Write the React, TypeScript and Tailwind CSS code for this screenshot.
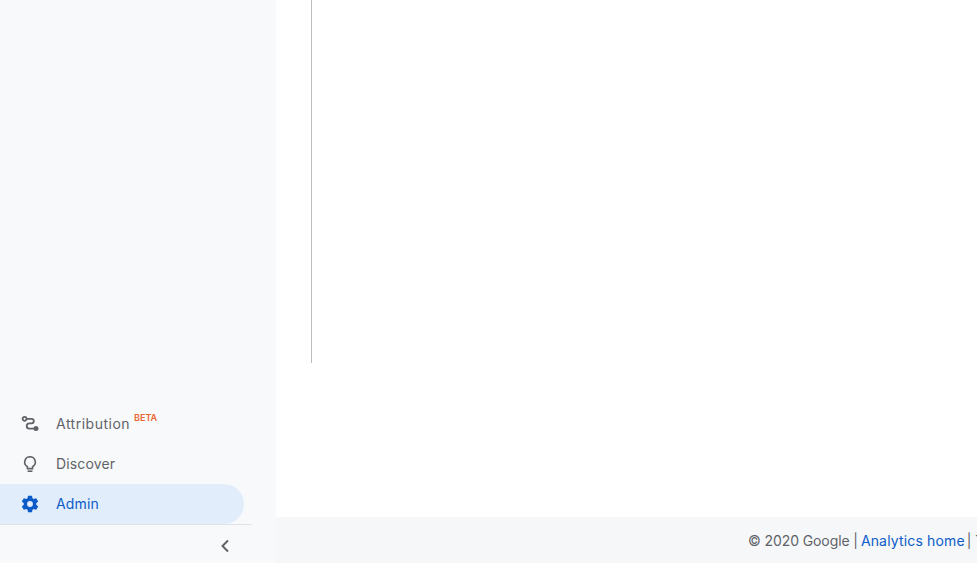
import { ReactNode } from "react";

function AttributionIcon() {
  return (
    <svg width="20" height="20" viewBox="0 0 20 20" fill="none" stroke="currentColor" strokeWidth="1.8">
      <circle cx="4.6" cy="4.8" r="2" />
      <path d="M6.6 4.8h4.9a2.3 2.3 0 0 1 0 4.6H9.3a2.6 2.6 0 0 0 0 5.2h5" />
      <circle cx="16" cy="14.6" r="2.5" fill="currentColor" stroke="none" />
    </svg>
  );
}

function BulbIcon() {
  return (
    <svg width="20" height="20" viewBox="0 0 20 20" fill="none" stroke="currentColor" strokeWidth="1.6">
      <path d="M10 2.8a5.3 5.3 0 0 0-2.6 9.9v1.9h5.2v-1.9A5.3 5.3 0 0 0 10 2.8z" />
      <path d="M7.6 17.2h4.8" />
    </svg>
  );
}

function GearIcon() {
  return (
    <svg width="20" height="20" viewBox="0 0 24 24" fill="currentColor">
      <path d="M19.43 12.98c.04-.32.07-.64.07-.98s-.03-.66-.07-.98l2.11-1.65a.5.5 0 0 0 .12-.64l-2-3.46a.5.5 0 0 0-.61-.22l-2.49 1a7.3 7.3 0 0 0-1.69-.98l-.38-2.65A.49.49 0 0 0 14 2h-4a.49.49 0 0 0-.49.42l-.38 2.65c-.61.25-1.17.59-1.69.98l-2.49-1a.5.5 0 0 0-.61.22l-2 3.46a.5.5 0 0 0 .12.64l2.11 1.65c-.04.32-.07.65-.07.98s.03.66.07.98l-2.11 1.65a.5.5 0 0 0-.12.64l2 3.46c.12.22.39.3.61.22l2.49-1c.52.4 1.08.73 1.69.98l.38 2.65c.03.24.24.42.49.42h4c.25 0 .46-.18.49-.42l.38-2.65c.61-.25 1.17-.59 1.69-.98l2.49 1c.23.09.49 0 .61-.22l2-3.46a.5.5 0 0 0-.12-.64l-2.11-1.65zM12 15.5a3.5 3.5 0 1 1 0-7 3.5 3.5 0 0 1 0 7z" />
    </svg>
  );
}

function NavItem({
  icon,
  label,
  active,
  badge,
  labelClass,
}: {
  icon: ReactNode;
  label: string;
  active?: boolean;
  badge?: string;
  labelClass: string;
}) {
  return (
    <div
      className={`flex h-10 w-[244px] items-center rounded-r-full pl-5 text-sm ${
        active ? "bg-[#e1edfb] text-[#0b5cc9]" : "text-[#5f6368]"
      }`}
    >
      <span className="flex w-9 shrink-0 items-center">{icon}</span>
      <span className={labelClass}>{label}</span>
      {badge && (
        <span className="mb-[14px] ml-1 text-[9px] font-semibold leading-none text-[#e8662f]">{badge}</span>
      )}
    </div>
  );
}

export default function App() {
  return (
    <div className="flex h-[563px] w-[977px] overflow-hidden bg-[#f6f7f9] font-['Inter',sans-serif]">
      <aside className="flex w-[276px] shrink-0 flex-col justify-end bg-[#f8f9fa]">
        <NavItem icon={<AttributionIcon />} label="Attribution" badge="BETA" labelClass="tracking-[0.5px]" />
        <NavItem icon={<BulbIcon />} label="Discover" labelClass="tracking-[0.15px]" />
        <NavItem icon={<GearIcon />} label="Admin" active labelClass="tracking-[0.15px]" />
        <div className="flex h-[39px] w-[252px] items-center justify-end border-t border-[#dfe1e5] pt-[4px] pr-[22px] text-[#5f6368]">
          <svg width="10" height="14" viewBox="0 0 10 14" fill="none" stroke="currentColor" strokeWidth="2">
            <path d="M8 1.5 2.5 7 8 12.5" />
          </svg>
        </div>
      </aside>
      <div className="flex min-w-0 flex-1 flex-col">
        <main className="flex-1 bg-white pl-[35px]">
          <div className="h-[363px] w-px bg-[#bdbdbd]" />
        </main>
        <footer className="flex h-[46px] shrink-0 items-center justify-end whitespace-nowrap pt-[2px] text-sm text-[#5f6368]">
          <div className="w-[229px] shrink-0 overflow-hidden">
            <span className="tracking-[-0.1px]">© 2020 Google |</span>
            <span className="ml-[3px] tracking-[0.15px] text-[#0b5cc9]">Analytics home</span>
            <span className="ml-[2px]">| Terms</span>
          </div>
        </footer>
      </div>
    </div>
  );
}
